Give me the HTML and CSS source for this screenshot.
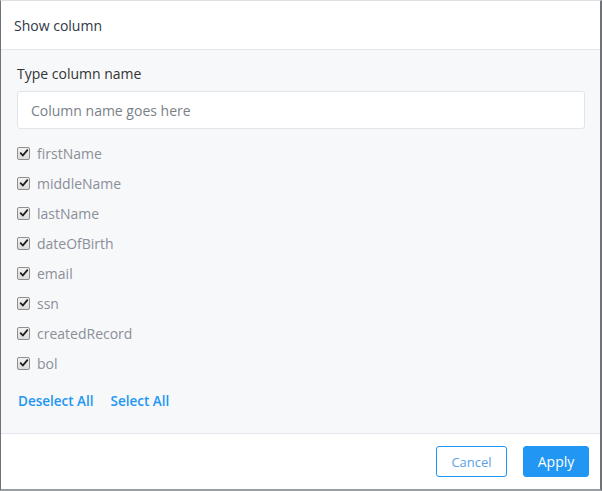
FILE: index.html
```html
<!DOCTYPE html>
<html>
<head>
<meta charset="utf-8">
<link rel="stylesheet" href="styles.css">
</head>
<body>
<div class="modal">
  <div class="modal-header">Show column</div>
  <div class="modal-body">
    <div class="field-label">Type column name</div>
    <div class="text-input">Column name goes here</div>
    <ul class="col-list">
      <li class="col-item"><span class="check"><svg viewBox="0 0 12 12" width="10" height="10"><path d="M2 6.2 L4.6 9 L10 2.6" fill="none" stroke="#1d1d1d" stroke-width="2.2" stroke-linecap="round" stroke-linejoin="round"/></svg></span>firstName</li>
      <li class="col-item"><span class="check"><svg viewBox="0 0 12 12" width="10" height="10"><path d="M2 6.2 L4.6 9 L10 2.6" fill="none" stroke="#1d1d1d" stroke-width="2.2" stroke-linecap="round" stroke-linejoin="round"/></svg></span>middleName</li>
      <li class="col-item"><span class="check"><svg viewBox="0 0 12 12" width="10" height="10"><path d="M2 6.2 L4.6 9 L10 2.6" fill="none" stroke="#1d1d1d" stroke-width="2.2" stroke-linecap="round" stroke-linejoin="round"/></svg></span>lastName</li>
      <li class="col-item"><span class="check"><svg viewBox="0 0 12 12" width="10" height="10"><path d="M2 6.2 L4.6 9 L10 2.6" fill="none" stroke="#1d1d1d" stroke-width="2.2" stroke-linecap="round" stroke-linejoin="round"/></svg></span>dateOfBirth</li>
      <li class="col-item"><span class="check"><svg viewBox="0 0 12 12" width="10" height="10"><path d="M2 6.2 L4.6 9 L10 2.6" fill="none" stroke="#1d1d1d" stroke-width="2.2" stroke-linecap="round" stroke-linejoin="round"/></svg></span>email</li>
      <li class="col-item"><span class="check"><svg viewBox="0 0 12 12" width="10" height="10"><path d="M2 6.2 L4.6 9 L10 2.6" fill="none" stroke="#1d1d1d" stroke-width="2.2" stroke-linecap="round" stroke-linejoin="round"/></svg></span>ssn</li>
      <li class="col-item"><span class="check"><svg viewBox="0 0 12 12" width="10" height="10"><path d="M2 6.2 L4.6 9 L10 2.6" fill="none" stroke="#1d1d1d" stroke-width="2.2" stroke-linecap="round" stroke-linejoin="round"/></svg></span>createdRecord</li>
      <li class="col-item"><span class="check"><svg viewBox="0 0 12 12" width="10" height="10"><path d="M2 6.2 L4.6 9 L10 2.6" fill="none" stroke="#1d1d1d" stroke-width="2.2" stroke-linecap="round" stroke-linejoin="round"/></svg></span>bol</li>
    </ul>
    <div class="links">
      <a class="link">Deselect All</a>
      <a class="link">Select All</a>
    </div>
  </div>
  <div class="modal-footer">
    <button class="btn btn-outline">Cancel</button>
    <button class="btn btn-primary">Apply</button>
  </div>
</div>
</body>
</html>
```
FILE: styles.css
```css
html, body {
  margin: 0;
  padding: 0;
  background: #ffffff;
}
body {
  font-family: "Open Sans", "Noto Sans", sans-serif;
}
.modal {
  width: 602px;
  height: 491px;
  box-sizing: border-box;
  border-top: 1px solid #dcdfe3;
  border-left: 1px solid #6f7277;
  border-right: 2px solid #6f7277;
  border-bottom: 2px solid #9a9da2;
  display: flex;
  flex-direction: column;
  background: #fff;
}
.modal-header {
  height: 49px;
  box-sizing: border-box;
  padding: 0 13px;
  display: flex;
  align-items: center;
  font-size: 14px;
  color: #2d3748;
  border-bottom: 1px solid #e3e6ea;
}
.modal-body {
  flex: 1;
  background: #f7f8fa;
  padding: 14px 15px 0 16px;
  border-bottom: 1px solid #e3e6ea;
}
.field-label {
  font-size: 14px;
  color: #333;
  line-height: 20px;
  margin-bottom: 7px;
}
.text-input {
  height: 38px;
  box-sizing: border-box;
  background: #fff;
  border: 1px solid #e1e4e8;
  border-radius: 3px;
  padding: 0 13px;
  display: flex;
  align-items: center;
  font-size: 14px;
  color: #7a7f87;
}
.col-list {
  list-style: none;
  margin: 9px 0 0 0;
  padding: 0;
}
.col-item {
  height: 30px;
  display: flex;
  align-items: center;
  font-size: 14px;
  color: #8a8f98;
}
.check {
  width: 11px;
  height: 11px;
  border: 1px solid #8e8e8e;
  border-radius: 2px;
  background: linear-gradient(#f2f2f2, #dcdcdc);
  display: flex;
  align-items: center;
  justify-content: center;
  margin: 0 7px 0 0;
}
.links {
  margin-top: 13px;
  display: flex;
  gap: 17px;
  padding-left: 1px;
}
.link {
  font-size: 13.5px;
  font-weight: 600;
  color: #2196f3;
  line-height: 20px;
}
.modal-footer {
  flex: 0 0 55px;
  display: flex;
  justify-content: flex-end;
  align-items: center;
  gap: 16px;
  padding-right: 11px;
}
.btn {
  height: 31px;
  box-sizing: border-box;
  border-radius: 3px;
  font-family: "Open Sans", "Noto Sans", sans-serif;
  padding: 0;
  cursor: pointer;
}
.btn-outline {
  width: 71px;
  background: #fff;
  border: 1px solid #2196f3;
  color: #5b9fe6;
  font-size: 13px;
}
.btn-primary {
  width: 66px;
  background: #2196f3;
  border: 1px solid #2196f3;
  color: #fff;
  font-size: 14px;
}
```
